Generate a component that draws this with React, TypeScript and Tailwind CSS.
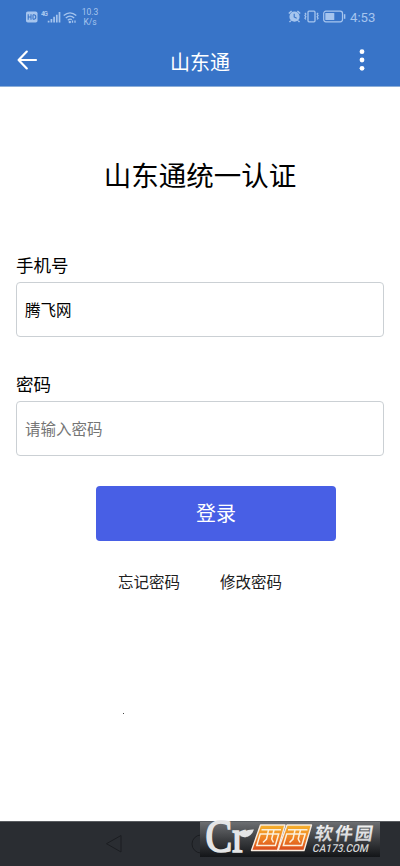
import { useState } from 'react'

const fontStack = "font-['Noto_Sans_CJK_SC',sans-serif]"

function StatusBar() {
  return (
    <div className="flex h-[34px] items-center justify-between pl-[26px] pr-6 text-[#a6c5ee]">
      <div className="flex items-center">
        <svg width="12" height="12" viewBox="0 0 12 12">
          <rect x="0" y="0.5" width="11.5" height="11" rx="1.8" fill="currentColor" />
          <path d="M2.2 3.3v5.4M5 3.3v5.4M2.2 6H5M7 3.7v4.6M7 3.8h.8q2 0 2 2.2T7.8 8.2H7" fill="none" stroke="#3874c8" strokeWidth="1.1" />
        </svg>
        <svg className="ml-[3px]" width="20" height="14" viewBox="0 0 20 14">
          <text x="0" y="6" fontSize="6.5" fontWeight="700" fill="currentColor" fontFamily="Roboto, sans-serif" textLength="7">4G</text>
          <path d="M7.6 12.5v-1.8M10.4 12.5V9M13.1 12.5V6.8M15.8 12.5V4.7M18.5 12.5V2" stroke="currentColor" strokeWidth="1.7" />
        </svg>
        <svg className="ml-[2px]" width="14" height="13" viewBox="0 0 14 13" fill="none" stroke="currentColor" strokeWidth="1.3">
          <path d="M.7 4.6Q7-.9 13.3 4.6M2.8 7Q7 3.2 11.2 7M4.8 9.2Q7 7.3 8.8 8.6" />
          <circle cx="6.8" cy="11" r="1.2" fill="currentColor" stroke="none" />
          <path d="M9.5 9.4v2.4M12 9.4v2.4" />
        </svg>
        <div className="ml-[4px] w-[18px] text-center font-['Roboto',sans-serif] text-[8.5px] leading-[10px]">
          <div>10.3</div>
          <div>K/s</div>
        </div>
      </div>
      <div className="flex items-center">
        <svg width="13" height="13" viewBox="0 0 13 13">
          <circle cx="6.5" cy="6.7" r="5.1" fill="currentColor" />
          <path d="M.8 3.6 3.6.9M12.2 3.6 9.4.9M2.8 10.6l-1.3 1.5M10.2 10.6l1.3 1.5" stroke="currentColor" strokeWidth="1.4" />
          <path d="M6.2 3.7v3.2l2.5 1.4" fill="none" stroke="#3874c8" strokeWidth="1.1" />
        </svg>
        <svg className="ml-[3px]" width="15" height="13" viewBox="0 0 15 13" fill="none" stroke="currentColor">
          <rect x="4" y="1.2" width="7" height="10.6" rx="1" strokeWidth="1.3" />
          <path d="M.9 2.8l1 1.3-1 1.4 1 1.3-1 1.4 1 1.3M14.1 2.8l-1 1.3 1 1.4-1 1.3 1 1.4-1 1.3" strokeWidth="1.2" />
        </svg>
        <svg className="ml-[4px]" width="23" height="13" viewBox="0 0 23 13">
          <rect x=".7" y="1.2" width="18.8" height="10.6" rx="2.2" fill="none" stroke="currentColor" strokeWidth="1.2" />
          <rect x="2.3" y="3" width="9" height="7" rx=".6" fill="currentColor" />
          <path d="M21.6 4.2v4.6" stroke="currentColor" strokeWidth="1.5" />
        </svg>
        <span className="ml-[4px] w-[26px] whitespace-nowrap pt-px font-['Roboto',sans-serif] text-[13.2px] leading-none">4:53</span>
      </div>
    </div>
  )
}

function NavBar() {
  return (
    <div className="grid h-[52px] grid-cols-[56px_1fr_56px] items-center text-white">
      <button className="pl-[17px]" aria-label="返回">
        <svg width="21" height="20" viewBox="0 0 21 20" fill="none" stroke="currentColor" strokeWidth="2.2" strokeLinecap="round" strokeLinejoin="round">
          <path d="M19 10H1.8M9.8 1.6 1.6 10l8.2 8.4" />
        </svg>
      </button>
      <h1 className="pt-[3px] text-center text-[20px] leading-none">山东通</h1>
      <button className="pl-[15px]" aria-label="更多">
        <svg width="6" height="22" viewBox="0 0 6 22" fill="currentColor">
          <circle cx="3" cy="2.7" r="2.4" />
          <circle cx="3" cy="11" r="2.4" />
          <circle cx="3" cy="19.3" r="2.4" />
        </svg>
      </button>
    </div>
  )
}

interface FieldProps {
  label: string
  type: string
  value: string
  placeholder?: string
  onChange: (value: string) => void
}

function Field({ label, type, value, placeholder, onChange }: FieldProps) {
  return (
    <label className="block">
      <span className="block h-[29px] text-[17.5px] leading-[24px] text-black">{label}</span>
      <input
        type={type}
        value={value}
        placeholder={placeholder}
        onChange={(e) => onChange(e.target.value)}
        className="block h-[55px] w-full rounded-[4px] border border-[#cbd0d4] bg-white px-2 pb-px text-[15.5px] text-black outline-none placeholder:text-[#757575]"
      />
    </label>
  )
}

// 西西软件园 logo
function SiteLogo() {
  return (
    <svg width="180" height="57" viewBox="0 -8 180 57" className="absolute bottom-0 left-[200px]">
      <defs>
        <linearGradient id="band" x1="0" y1="0" x2="0" y2="1">
          <stop offset="0" stopColor="#6c6e71" />
          <stop offset="0.5" stopColor="#3c3e41" />
          <stop offset="1" stopColor="#131518" />
        </linearGradient>
        <linearGradient id="tile" x1="0" y1="0" x2="0" y2="1">
          <stop offset="0" stopColor="#f6b32e" />
          <stop offset="0.5" stopColor="#ef8425" />
          <stop offset="1" stopColor="#d9491b" />
        </linearGradient>
        <linearGradient id="silver" x1="0" y1="0" x2="0" y2="1">
          <stop offset="0" stopColor="#ffffff" />
          <stop offset="1" stopColor="#c9cbcd" />
        </linearGradient>
      </defs>
      <rect x="0" y="5" width="180" height="35" fill="url(#band)" />
      <text transform="translate(5.5 34.5) scale(1 1.15)" fontFamily="'Liberation Serif', serif" fontSize="40" fill="#e4e5e6" stroke="#e4e5e6" strokeWidth="1.5">Cr</text>
      <path d="M40 19q3-7 14-6.5Q51 21 43 20z" fill="#e4e5e6" />
      {[0, 26.5].map((dx) => (
        <g key={dx} transform={`translate(${dx} 0)`}>
          <path d="M60.5 8H85L77.5 33.5H51.5z" fill="url(#tile)" stroke="#f8ece0" strokeWidth="1.4" strokeLinejoin="round" />
          <path d="M61.5 12.8h19.5M60.2 17h18.5l-3.4 11.5H56.8zM68.5 13l-2 9-3.5 3.5M74 13l-2.3 9 1.8 3.5" fill="none" stroke="#fbf0dc" strokeWidth="1.5" />
        </g>
      ))}
      <text transform="translate(114 22.5) skewX(-9)" fontFamily="'Noto Sans CJK SC', sans-serif" fontSize="18" fontWeight="700" fill="url(#silver)" textLength="58">软件园</text>
      <text transform="translate(112 35) skewX(-12)" fontFamily="Roboto, sans-serif" fontSize="11" fontWeight="500" fill="#d5d6d7" textLength="56" lengthAdjust="spacingAndGlyphs">CA173.COM</text>
    </svg>
  )
}

function SystemNav() {
  return (
    <div className="relative grid h-[45px] grid-cols-[114px_114px_1fr] items-center border-t border-[#595c60] bg-[#2a2d32]">
      <span />
      <svg width="76" height="24" viewBox="0 0 76 24" fill="none" stroke="#1b1d21" strokeWidth="1" className="ml-[-10px]">
        <path d="M17 3.5v16.5L2.5 11.7z" />
      </svg>
      <svg width="22" height="22" viewBox="0 0 22 22" fill="none" stroke="#1b1d21" strokeWidth="1" className="ml-[-38px]">
        <circle cx="11" cy="11" r="9" />
      </svg>
      <SiteLogo />
    </div>
  )
}

export default function App() {
  const [phone, setPhone] = useState('腾飞网')
  const [password, setPassword] = useState('')

  return (
    <div className={`flex h-[866px] w-[400px] flex-col overflow-hidden bg-white ${fontStack}`}>
      <header className="h-[87px] border-b border-[#8caed8] bg-[#3874c8]">
        <StatusBar />
        <NavBar />
      </header>

      <main className="flex flex-1 flex-col px-4">
        <h2 className="mt-[67px] text-center text-[27.5px] leading-[40px] text-black">山东通统一认证</h2>

        <div className="mt-[59px] flex flex-col gap-[35px]">
          <Field label="手机号" type="text" value={phone} onChange={setPhone} />
          <Field label="密码" type="password" value={password} placeholder="请输入密码" onChange={setPassword} />
        </div>

        <button className="ml-20 mt-[30px] h-[55px] w-[240px] rounded-[4px] bg-[#485fe5] pb-0.5 text-[20px] text-white">
          登录
        </button>

        <div className="mt-[28px] flex justify-center gap-10 text-[15.5px] leading-6 text-[#202020]">
          <a href="#">忘记密码</a>
          <a href="#">修改密码</a>
        </div>

        <span className="ml-[107px] mt-[120px] size-px bg-[#444]" />
      </main>

      <SystemNav />
    </div>
  )
}
